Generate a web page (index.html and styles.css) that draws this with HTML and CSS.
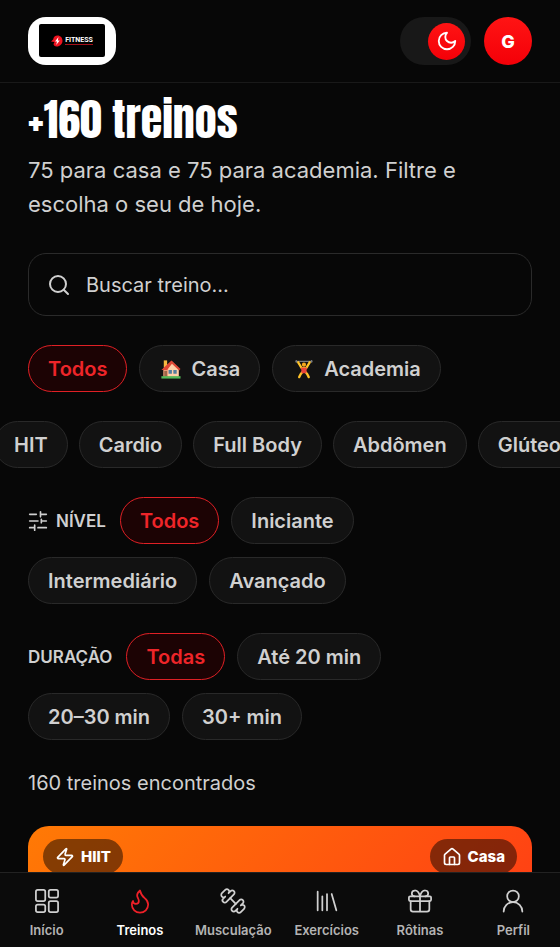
FILE: index.html
```html
<!DOCTYPE html>
<html lang="pt-BR">
<head>
<meta charset="utf-8">
<meta name="viewport" content="width=device-width, initial-scale=1">
<title>Treinos</title>
<link rel="stylesheet" href="styles.css">
</head>
<body>
<div class="app">
  <header class="topbar">
    <a class="brand" href="#" aria-label="Fitness">
      <span class="brand-plate">
        <svg class="brand-mark" viewBox="0 0 12 12" aria-hidden="true"><path class="brand-blob" d="M0 6.600 2.200 4.400C2.500 2 4.200.5 6.500.5c3 0 5 2.300 5 5.200 0 3.200-2.500 5.800-5.800 5.800-2 0-3-1-3.200-2.500l1-2z"/><path class="brand-bolt" d="M7.500 2 4 6.400h2L5.200 10l3.600-4.600h-2z"/></svg>
        <span class="brand-name">FITNESS</span>
      </span>
    </a>
    <div class="topbar-actions">
      <button class="theme" type="button" aria-label="Alternar tema"><span class="theme-thumb"><svg class="icon" viewBox="0 0 24 24"><path d="M12 3a6 6 0 0 0 9 9 9 9 0 1 1-9-9Z"/></svg></span></button>
      <button class="avatar" type="button">G</button>
    </div>
  </header>

  <main class="content">
    <h1 class="title">+160 treinos</h1>
    <p class="lead">75 para casa e 75 para academia. Filtre e escolha o seu de hoje.</p>

    <label class="search">
      <svg class="icon" viewBox="0 0 24 24" aria-hidden="true"><circle cx="11" cy="11" r="8"/><path d="m21 21-4.300-4.300"/></svg>
      <input type="search" placeholder="Buscar treino..." aria-label="Buscar treino">
    </label>

    <div class="filters">
      <button class="chip active" type="button">Todos</button>
      <button class="chip" type="button">
        <svg class="emoji" viewBox="-2.500 -1.500 23 23" aria-hidden="true"><path fill="#f6b940" d="M2.500 1h3.500v7H2.500z"/><path fill="#f4a27c" d="M2 9 11 2l7 7v9H2z"/><path fill="#ffd0a8" d="M7 8.500 11.500 4 18 10v8H7z"/><path fill="#df4735" d="m10.500 1 9.500 9-1.500 1.500-7.500-7L6 11H0z"/><path fill="#9b6549" d="M3 12h3v6H3z"/><path fill="#557d9d" d="M7.500 11h3.500v4H7.500zm5 0H16v4h-3.500z"/><path fill="#53ba59" d="M0 17.500h20V20H0z"/></svg>
        Casa</button>
      <button class="chip" type="button">
        <svg class="emoji" viewBox="-2.500 -1.500 23 23" aria-hidden="true"><path fill="none" stroke="#777b80" stroke-width="1.200" d="M1 2h18M2 .5v3m16-3v3"/><path fill="none" stroke="#ffc329" stroke-width="2.400" stroke-linecap="round" stroke-linejoin="round" d="m4 3 3.500 6h5L16 3M8.500 13l-2 2.500-1.500 3m6.500-5.500 2 2.500 1.500 3"/><circle cx="10" cy="5.500" r="2.200" fill="#f4a71d"/><path fill="#e8443a" d="M7 8.500h6l-.5 6h-5z"/></svg>
        Academia</button>
    </div>

    <div class="filters scroller">
      <button class="chip" type="button">HIT</button>
      <button class="chip" type="button">Cardio</button>
      <button class="chip" type="button">Full Body</button>
      <button class="chip" type="button">Abdômen</button>
      <button class="chip" type="button">Glúteos</button>
    </div>

    <div class="filters">
      <span class="filter-label"><svg class="icon" viewBox="0 0 24 24" aria-hidden="true"><path d="M10 4H2M22 4h-7M12 12H2M22 12h-6M8 20H2M22 20H12M15 1v6M16 10v4M8 17v6"/></svg>NÍVEL</span>
      <button class="chip active" type="button">Todos</button>
      <button class="chip" type="button">Iniciante</button>
      <button class="chip" type="button">Intermediário</button>
      <button class="chip" type="button">Avançado</button>
    </div>

    <div class="filters">
      <span class="filter-label">DURAÇÃO</span>
      <button class="chip active" type="button">Todas</button>
      <button class="chip" type="button">Até 20 min</button>
      <button class="chip" type="button">20–30 min</button>
      <button class="chip" type="button">30+ min</button>
    </div>

    <p class="count">160 treinos encontrados</p>

    <article class="card">
      <span class="badge"><svg class="icon" viewBox="0 0 24 24" aria-hidden="true"><path d="M4 14a1 1 0 0 1-.78-1.630l9.900-10.200a.5.5 0 0 1 .86.460l-1.920 6.020A1 1 0 0 0 13 10h7a1 1 0 0 1 .78 1.630l-9.900 10.200a.5.5 0 0 1-.86-.460l1.920-6.020A1 1 0 0 0 11 14z"/></svg>HIIT</span>
      <span class="badge"><svg class="icon" viewBox="0 0 24 24" aria-hidden="true"><path d="M15 21v-8a1 1 0 0 0-1-1h-4a1 1 0 0 0-1 1v8"/><path d="M3 10a2 2 0 0 1 .709-1.528l7-6a2 2 0 0 1 2.582 0l7 6A2 2 0 0 1 21 10v9a2 2 0 0 1-2 2H5a2 2 0 0 1-2-2z"/></svg>Casa</span>
    </article>
  </main>

  <nav class="tabs" aria-label="Principal">
    <a class="tab" href="#"><svg class="icon" viewBox="0 0 24 24"><rect x="2.500" y="2.500" width="8" height="9.500" rx="1.500"/><rect x="13.500" y="2.500" width="8" height="6.500" rx="1.500"/><rect x="13.500" y="12" width="8" height="9.500" rx="1.500"/><rect x="2.500" y="15" width="8" height="6.500" rx="1.500"/></svg>Início</a>
    <a class="tab current" href="#" aria-current="page"><svg class="icon" viewBox="0 0 24 24"><path d="M8.500 14.500A2.500 2.500 0 0 0 11 12c0-1.380-.5-2-1-3-1.072-2.143-.224-4.054 2-6 .5 2.500 2 4.900 4 6.500 2 1.600 3 3.500 3 5.500a7 7 0 1 1-14 0c0-1.153.433-2.294 1-3a2.500 2.500 0 0 0 2.500 2.500z"/></svg>Treinos</a>
    <a class="tab" href="#"><svg class="icon" viewBox="0 0 24 24"><path d="M14.400 14.400 9.600 9.600"/><path d="M18.657 21.485a2 2 0 1 1-2.829-2.828l-1.767 1.768a2 2 0 1 1-2.829-2.829l6.364-6.364a2 2 0 1 1 2.829 2.829l-1.768 1.767a2 2 0 1 1 2.828 2.829z"/><path d="M6.404 12.768a2 2 0 1 1-2.829-2.829l1.768-1.767a2 2 0 1 1-2.828-2.829l2.828-2.828a2 2 0 1 1 2.829 2.828l1.767-1.768a2 2 0 1 1 2.829 2.829z"/></svg>Musculação</a>
    <a class="tab" href="#"><svg class="icon" viewBox="0 0 24 24"><path d="m16 6 4 14M12 6v14M8 8v12M4 4v16"/></svg>Exercícios</a>
    <a class="tab" href="#"><svg class="icon" viewBox="0 0 24 24"><rect x="2.500" y="8" width="19" height="4" rx="1"/><path d="M12 8v13M20 12v7a2 2 0 0 1-2 2H6a2 2 0 0 1-2-2v-7M7.500 8a2.500 2.500 0 0 1 0-5A4.800 8 0 0 1 12 8a4.800 8 0 0 1 4.500-5 2.500 2.500 0 0 1 0 5"/></svg>Rôtinas</a>
    <a class="tab" href="#"><svg class="icon" viewBox="0 0 24 24"><circle cx="12" cy="8" r="5"/><path d="M20 21a8 8 0 0 0-16 0"/></svg>Perfil</a>
  </nav>
</div>
</body>
</html>
```

FILE: styles.css
```css
* { box-sizing: border-box; }

body {
  margin: 0;
  background: #070707;
  color: #d0d0d0;
  font-family: Inter, "Liberation Sans", sans-serif;
}

button, input { font: inherit; color: inherit; }
button { padding: 0; border: 0; cursor: pointer; }
a { color: inherit; text-decoration: none; }

.icon {
  flex: none;
  width: 20px;
  height: 20px;
  fill: none;
  stroke: currentColor;
  stroke-width: 2;
  stroke-linecap: round;
  stroke-linejoin: round;
}

.app {
  display: flex;
  flex-direction: column;
  height: 100vh;
}

.topbar {
  flex: none;
  display: flex;
  align-items: center;
  justify-content: space-between;
  padding: 17px 28px;
  border-bottom: 1px solid #191919;
}

.brand {
  padding: 7px 11px 8px;
  border-radius: 18px;
  background: #fff;
}

.brand-plate {
  display: flex;
  align-items: center;
  justify-content: center;
  gap: 2px;
  width: 66px;
  height: 33px;
  border-radius: 2px;
  background: #000;
}

.brand-mark { width: 12px; height: 12px; }
.brand-blob { fill: #ee1320; }
.brand-bolt { fill: #fff; }

.brand-name {
  border-bottom: 1px solid #a3101a;
  color: #fff;
  font: 700 7px/8px Roboto, sans-serif;
}

.topbar-actions { display: flex; gap: 13px; }

.theme {
  display: flex;
  justify-content: flex-end;
  align-items: center;
  width: 71px;
  height: 48px;
  padding-right: 6px;
  border-radius: 24px;
  background: #181818;
}

.theme-thumb {
  display: grid;
  place-items: center;
  width: 37px;
  height: 37px;
  border-radius: 50%;
  background: linear-gradient(#ff1414, #f40008);
  color: #fff;
}

.theme-thumb .icon { width: 22px; height: 22px; }

.avatar {
  width: 48px;
  height: 48px;
  border-radius: 50%;
  background: linear-gradient(#ff1414, #f40008);
  color: #fff;
  font-size: 18px;
  font-weight: 800;
}

.content {
  flex: 1;
  min-height: 0;
  padding: 8px 28px 0;
  overflow-x: hidden;
  overflow-y: auto;
  scrollbar-width: none;
}

.title {
  margin: 0;
  color: #fff;
  font: 400 44px/56px Anton, Impact, "Liberation Sans Narrow", sans-serif;
}

.lead {
  margin: 6px 0 32px;
  font-size: 22px;
  line-height: 34px;
}

.search {
  display: flex;
  align-items: center;
  gap: 15px;
  height: 63px;
  margin-bottom: 29px;
  padding: 0 18px;
  border: 1px solid #2a2a2a;
  border-radius: 18px;
}

.search .icon {
  width: 24px;
  height: 24px;
  stroke-width: 2;
}

.search input {
  flex: 1;
  min-width: 0;
  padding: 0;
  border: 0;
  outline: 0;
  background: none;
  font-size: 20px;
}

.search input::placeholder { color: inherit; opacity: 1; }

.filters {
  display: flex;
  flex-wrap: wrap;
  align-items: center;
  gap: 13px 12px;
  margin-bottom: 29px;
}

.scroller {
  flex-wrap: nowrap;
  column-gap: 11px;
  margin-inline: -28px;
  overflow-x: auto;
  scrollbar-width: none;
}

.scroller .chip:first-child { margin-left: -6px; }

.chip {
  flex: none;
  display: flex;
  align-items: center;
  gap: 10px;
  height: 47px;
  padding: 0 19px;
  border: 1px solid #292929;
  border-radius: 24px;
  background: #121212;
  font-size: 20px;
  font-weight: 600;
}

.chip.active {
  border-color: #e02025;
  background: #1c0304;
  color: #ee2529;
}

.emoji { width: 22px; height: 22px; }

.filter-label {
  display: flex;
  align-items: center;
  gap: 8px;
  padding-right: 2px;
  font-size: 17px;
  font-weight: 600;
}

.count {
  margin: 0 0 29px;
  font-size: 20px;
  line-height: 28px;
}

.card {
  display: flex;
  justify-content: space-between;
  align-items: flex-start;
  min-height: 210px;
  padding: 13px 15px;
  border-radius: 21px;
  background: linear-gradient(135deg, #ff7a05, #ff4014 80%);
}

.badge {
  display: flex;
  align-items: center;
  gap: 6px;
  height: 35px;
  padding: 0 12px;
  border-radius: 18px;
  background: rgb(0 0 0 / 48%);
  color: #fff;
  font-size: 15px;
  font-weight: 800;
}

.tabs {
  flex: none;
  display: grid;
  grid-template-columns: repeat(6, 1fr);
  height: 75px;
  padding-top: 14px;
  border-top: 1px solid #222;
  background: #0b0b0b;
}

.tab {
  display: flex;
  flex-direction: column;
  align-items: center;
  gap: 7px;
  color: #b4b4b4;
  font-size: 13px;
  font-weight: 600;
  line-height: 16px;
}

.tab .icon {
  width: 28px;
  height: 28px;
  stroke: #d0d0d0;
  stroke-width: 1.5;
}

.tab.current { color: #fff; }
.tab.current .icon { stroke: #ee2028; }
```
